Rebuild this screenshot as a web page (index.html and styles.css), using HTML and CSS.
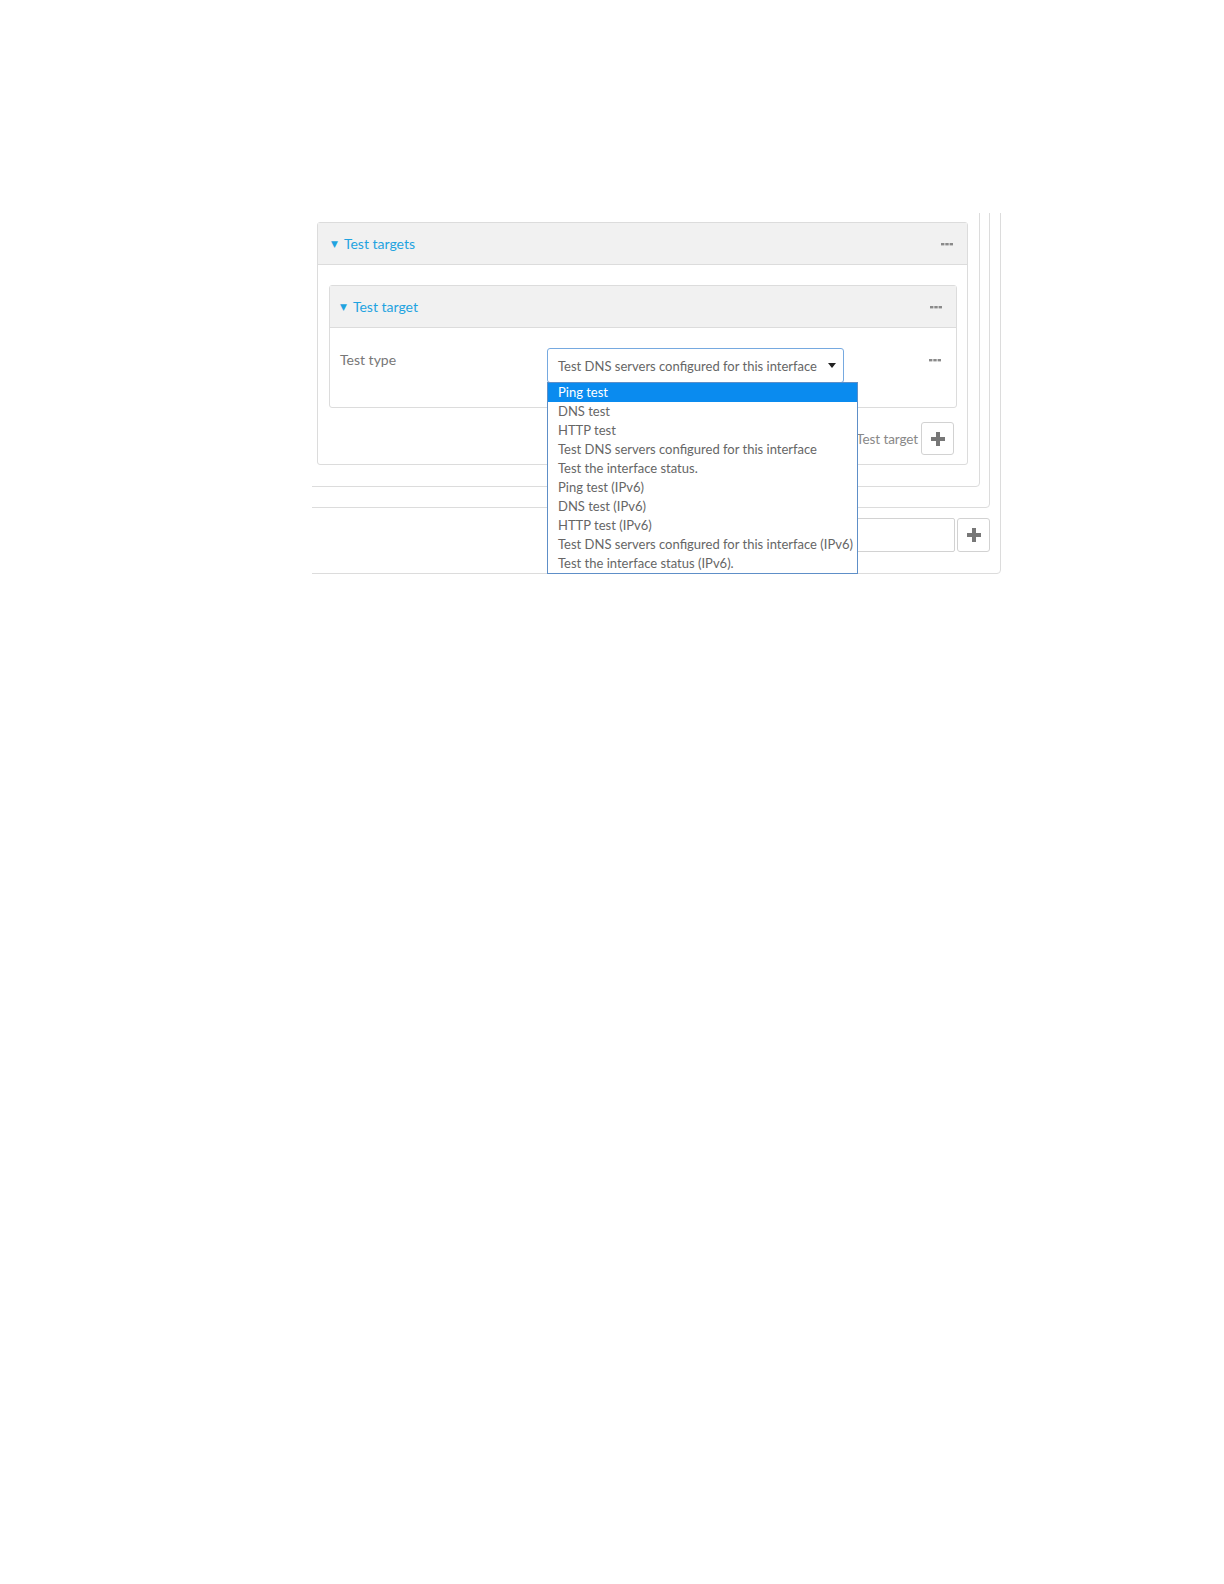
FILE: index.html
```html
<!DOCTYPE html>
<html>
<head>
<meta charset="utf-8">
<link rel="stylesheet" href="styles.css">
</head>
<body>
<div class="clip">
  <div class="box box-c">
    <div class="box box-b">
      <div class="box box-a">
        <div class="panel outer">
          <div class="panel-head">
            <span class="caret">&#9660;</span><span class="title">Test targets</span>
            <svg class="dots" width="12" height="4" viewBox="0 0 12 4"><rect x="0" y="1" width="3.4" height="2.4"/><rect x="4.3" y="1" width="3.4" height="2.4"/><rect x="8.6" y="1" width="3.4" height="2.4"/></svg>
          </div>
          <div class="panel-body">
            <div class="panel inner">
              <div class="panel-head">
                <span class="caret">&#9660;</span><span class="title">Test target</span>
                <svg class="dots" width="12" height="4" viewBox="0 0 12 4"><rect x="0" y="1" width="3.4" height="2.4"/><rect x="4.3" y="1" width="3.4" height="2.4"/><rect x="8.6" y="1" width="3.4" height="2.4"/></svg>
              </div>
              <div class="field-row">
                <div class="label">Test type</div>
                <div class="select-wrap">
                  <div class="select">
                    <span>Test DNS servers configured for this interface</span>
                    <svg width="8" height="5" viewBox="0 0 8 5"><path d="M0 0h8L4 5z"/></svg>
                  </div>
                  <ul class="dropdown">
                    <li class="sel">Ping test</li>
                    <li>DNS test</li>
                    <li>HTTP test</li>
                    <li>Test DNS servers configured for this interface</li>
                    <li>Test the interface status.</li>
                    <li>Ping test (IPv6)</li>
                    <li>DNS test (IPv6)</li>
                    <li>HTTP test (IPv6)</li>
                    <li>Test DNS servers configured for this interface (IPv6)</li>
                    <li>Test the interface status (IPv6).</li>
                  </ul>
                </div>
                <svg class="dots row-dots" width="12" height="4" viewBox="0 0 12 4"><rect x="0" y="1" width="3.4" height="2.4"/><rect x="4.3" y="1" width="3.4" height="2.4"/><rect x="8.6" y="1" width="3.4" height="2.4"/></svg>
              </div>
            </div>
            <div class="add-row">
              <span class="add-label">Test target</span>
              <button class="plus"><svg width="14" height="14" viewBox="0 0 14 14"><path d="M5 0h4v5h5v4H9v5H5V9H0V5h5z"/></svg></button>
            </div>
          </div>
        </div>
      </div>
    </div>
    <div class="input-row">
      <div class="input"></div>
      <button class="plus"><svg width="14" height="14" viewBox="0 0 14 14"><path d="M5 0h4v5h5v4H9v5H5V9H0V5h5z"/></svg></button>
    </div>
  </div>
</div>
</body>
</html>
```
FILE: styles.css
```css
* { box-sizing: border-box; }
html, body { margin: 0; padding: 0; background: #fff; }
body {
  font-family: Lato, "Open Sans", sans-serif;
  font-size: 13px;
  color: #666;
  padding: 213px 0 0 312px;
}
.clip {
  width: 690px;
  height: 361px;
  overflow: hidden;
}
.box {
  border: 1px solid #dcdcdc;
  border-radius: 4px;
}
.box-c {
  margin: -30px 0 0 -30px;
  width: 719px;
  padding: 10px 10px 21px 10px;
}
.box-b {
  padding: 10px 9px 20px 10px;
}
.box-a {
  padding: 16px 11px 21px 12px;
}
.panel {
  border: 1px solid #dcdcdc;
  border-radius: 3px;
  background: #fff;
}
.panel-head {
  height: 42px;
  background: #f1f1f1;
  border-bottom: 1px solid #dcdcdc;
  display: flex;
  align-items: center;
  padding: 0 14px 0 13px;
}
.caret {
  font-size: 9px;
  color: #1fa3e0;
  margin-right: 6px;
  font-family: "DejaVu Sans", sans-serif;
}
.title {
  color: #1fa3e0;
  font-size: 14px;
  flex: 1;
}
.dots { fill: #8a8a8a; }
.panel-body {
  padding: 20px 10px 9px 11px;
}
.inner .panel-head { padding-left: 10px; padding-right: 14px; }
.field-row {
  height: 79px;
  display: flex;
  align-items: flex-start;
  padding: 20px 15px 0 10px;
}
.label {
  width: 207px;
  font-size: 14px;
  color: #777;
  line-height: 18px;
  margin-top: 3px;
}
.select-wrap {
  position: relative;
  width: 297px;
}
.select {
  height: 35px;
  border: 1px solid #76a9e0;
  border-radius: 3px;
  display: flex;
  align-items: center;
  justify-content: space-between;
  padding: 0 7px 0 10px;
  color: #666;
  background: #fff;
}
.select svg { fill: #222; }
.dropdown {
  position: absolute;
  left: 0;
  top: 34px;
  width: 311px;
  margin: 0;
  padding: 0;
  list-style: none;
  border: 1px solid #5e8fc8;
  background: #fff;
  z-index: 5;
}
.dropdown li {
  height: 19px;
  line-height: 19px;
  padding-left: 10px;
  white-space: nowrap;
  color: #666;
}
.dropdown li.sel {
  background: #0a8bef;
  color: #fff;
}
.row-dots { margin-left: auto; margin-top: 10px; }
.add-row {
  display: flex;
  justify-content: flex-end;
  align-items: center;
  gap: 3px;
  margin: 14px 3px 0 0;
}
.add-label { color: #888; font-size: 13.5px; letter-spacing: -0.1px; }
.plus {
  width: 33px;
  height: 33px;
  border: 1px solid #d2d2d2;
  border-radius: 3px;
  background: #fff;
  padding: 0;
  display: flex;
  align-items: center;
  justify-content: center;
}
.plus svg { fill: #777; }
.input-row {
  display: flex;
  justify-content: flex-end;
  gap: 2px;
  margin-top: 10px;
}
.input {
  width: 400px;
  height: 34px;
  border: 1px solid #d2d2d2;
  border-radius: 2px;
}
.input-row .plus { height: 34px; }
```
